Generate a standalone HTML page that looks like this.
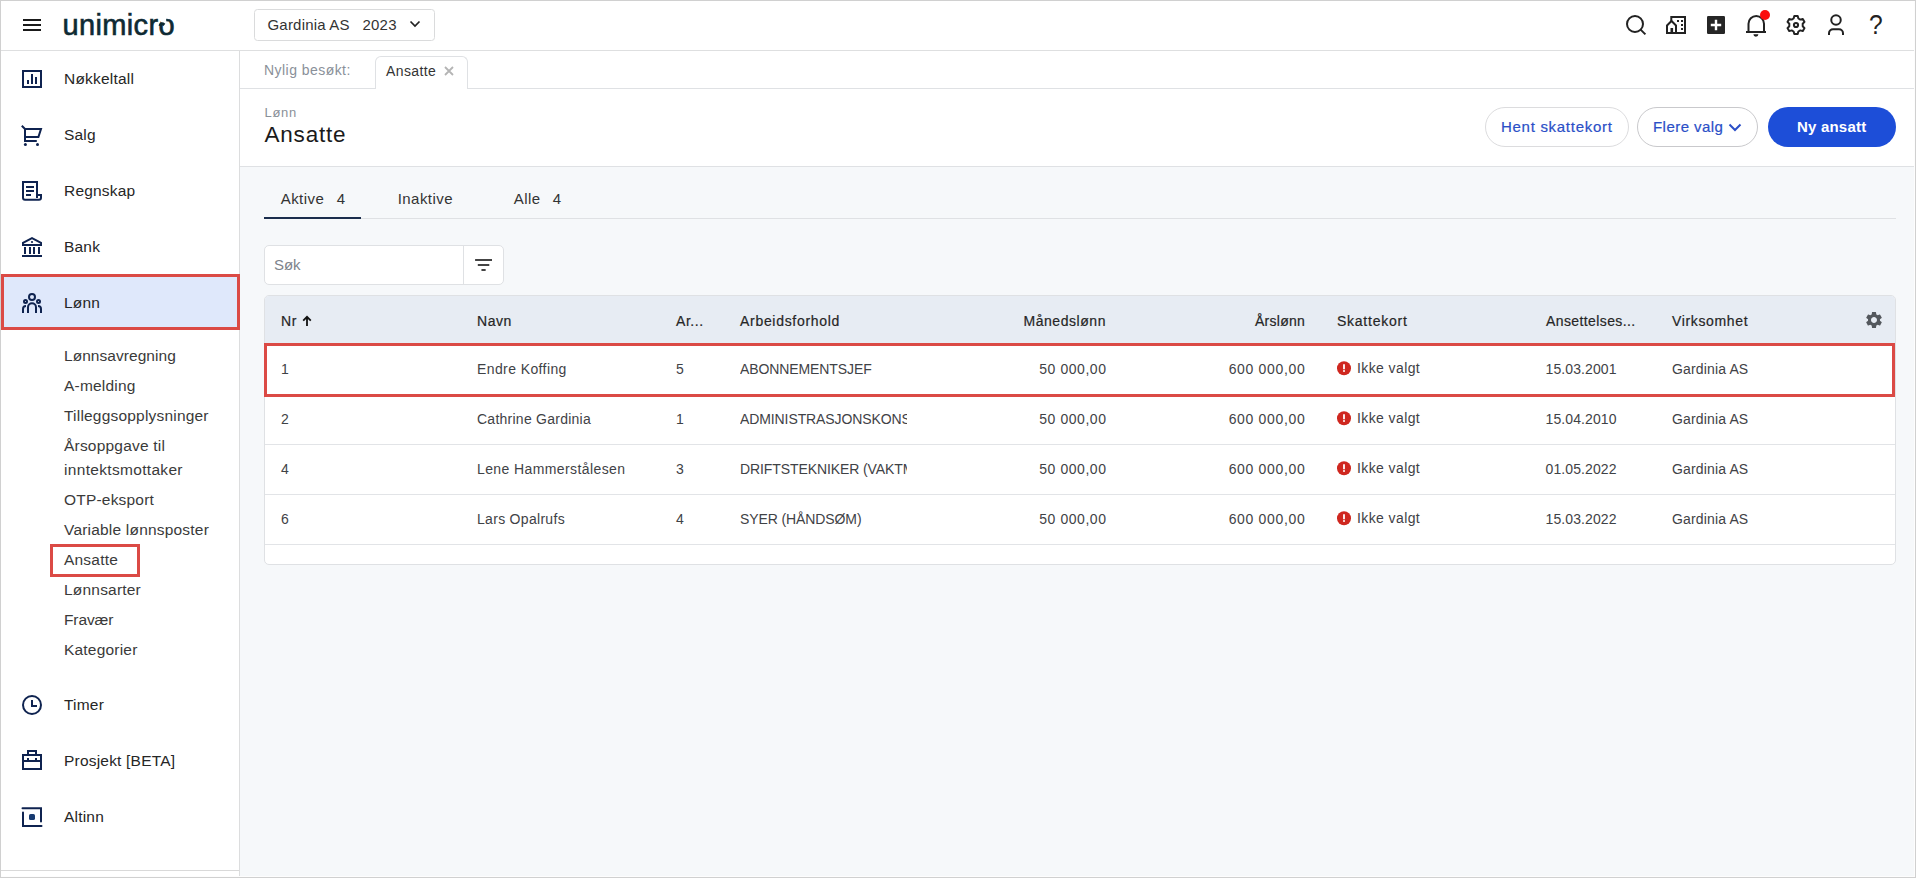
<!DOCTYPE html>
<html lang="no">
<head>
<meta charset="utf-8">
<title>Ansatte</title>
<style>
*{box-sizing:border-box;margin:0;padding:0}
html,body{width:1916px;height:878px;overflow:hidden;background:#f6f8fa}
body{font-family:"Liberation Sans",sans-serif;color:#262626;position:relative;font-size:15px}
.abs{position:absolute;white-space:nowrap}
#frame{position:absolute;left:0;top:0;width:1916px;height:878px;border:1px solid #d0d0d0;pointer-events:none;z-index:50}
#frame:after{content:"";position:absolute;left:0;top:0;right:0;bottom:0;border-right:1px solid #fdfdfd;border-bottom:1px solid #fdfdfd}
#topbar{position:absolute;left:0;top:0;width:1916px;height:51px;background:#fff;border-bottom:1px solid #dedfe0}
#sidebar{position:absolute;left:0;top:51px;width:240px;height:827px;background:#fff;border-right:1px solid #dcddde}
#sidebottom{position:absolute;left:0;top:870px;width:239px;height:1px;background:#d9d9d9}
#tabbar{position:absolute;left:240px;top:51px;width:1676px;height:38px;background:#fff;border-bottom:1px solid #dfe1e4}
#pagehead{position:absolute;left:240px;top:89px;width:1676px;height:78px;background:#fff;border-bottom:1px solid #dfe1e4}
.nav{position:absolute;left:64px;font-size:15.5px;line-height:18px;color:#262626;letter-spacing:.2px;white-space:nowrap}
.sub{position:absolute;left:64px;font-size:15.5px;line-height:18px;color:#3a3a3a;letter-spacing:.2px;white-space:nowrap}
.tb{font-size:15px;line-height:18px;color:#333;letter-spacing:.45px}
.th{font-size:14px;line-height:18px;color:#262626;letter-spacing:.55px;-webkit-text-stroke:.2px #262626}
.td{font-size:14px;line-height:18px;color:#3f4246;letter-spacing:.4px}
.r{text-align:right}
.ico{position:absolute;left:20px;width:24px;height:24px}
</style>
</head>
<body>
<div id="topbar"></div>
<div id="sidebar"></div>
<div id="sidebottom"></div>
<div id="tabbar"></div>
<div id="pagehead"></div>

<header>
<!-- TOPBAR -->
<svg class="abs" style="left:20px;top:13px" width="24" height="24" viewBox="0 0 24 24"><path d="M3 18h18v-2H3v2zm0-5h18v-2H3v2zm0-7v2h18V6H3z" fill="#1a1a1a"/></svg>
<div class="abs tx" id="logo" style="left:62.5px;top:8.5px;font-size:29px;color:#0e2a33;letter-spacing:.35px;line-height:32px;-webkit-text-stroke:.6px #0e2a33">unimicro</div>
<svg class="abs" style="left:150px;top:10px" width="30" height="30" viewBox="150 10 30 30" fill="none"><path d="M166.600 27L166 16.500L158.700 16.500L158.700 19.800Z" fill="#fff"/><path d="M160.100 26C160.400 23.200 162.600 23.500 164.400 24.900" stroke="#0e2a33" stroke-width="3" stroke-linecap="butt"/></svg>
<div class="abs" style="left:254px;top:9px;width:181px;height:32px;border:1px solid #dadbdc;border-radius:3.500px;background:#fff"></div>
<div class="abs tx" style="left:267.500px;top:16px;font-size:15px;color:#333;letter-spacing:.2px;line-height:18px">Gardinia AS</div>
<div class="abs tx" style="left:362.500px;top:16px;font-size:15px;color:#333;letter-spacing:.2px;line-height:18px">2023</div>
<svg class="abs" style="left:408px;top:17px" width="14" height="14" viewBox="0 0 14 14"><path d="M2.5 4.5L7 9l4.5-4.5" fill="none" stroke="#222" stroke-width="1.7"/></svg>

<!-- TOP ICONS -->
<svg class="abs" style="left:1624px;top:13px" width="24" height="24" viewBox="0 0 24 24" fill="none" stroke="#222" stroke-width="2"><circle cx="11" cy="11" r="8"/><path d="M16.600 16.600L21.400 21.400"/></svg>
<svg class="abs" style="left:1664px;top:13px" width="24" height="24" viewBox="0 0 24 24" fill="none" stroke="#222" stroke-width="2"><path d="M7.300 8.300V4H21V20H12"/><path d="M3 20V12.500L7.500 8L12 12.500V20Z"/><path d="M6.500 20h2.600v-5H6.500z" fill="#222" stroke="none"/><path d="M13 7h2v2h-2zM17 7h2v2h-2zM17 11h2v2h-2zM17 15h2v2h-2z" fill="#222" stroke="none"/></svg>
<svg class="abs" style="left:1704px;top:13px" width="24" height="24" viewBox="0 0 24 24"><rect x="3" y="3" width="18" height="18" rx="1.200" fill="#262626"/><path d="M12 6.800v10.400M6.800 12h10.400" stroke="#fff" stroke-width="2.400"/></svg>
<svg class="abs" style="left:1744px;top:13px" width="24" height="24" viewBox="0 0 24 24" fill="none" stroke="#222" stroke-width="2"><path d="M4.500 19V10.750a7.750 7.750 0 0 1 15.500 0V19"/><path d="M2 19h20"/><path d="M9.400 21.200h5a2.500 2.500 0 0 1-5 0z" fill="#222" stroke="none"/></svg>
<div class="abs" style="left:1760px;top:10px;width:10px;height:10px;border-radius:50%;background:#fb0d0d"></div>
<svg class="abs" style="left:1784px;top:13px" width="24" height="24" viewBox="0 0 24 24" fill="none" stroke="#222" stroke-width="2" stroke-linejoin="round"><circle cx="12" cy="12" r="2.100"/><path d="M10.300 3h3.400l.7 2.500 1.900 1.100 2.500-.7 1.700 3-1.800 1.900v2.400l1.800 1.900-1.700 3-2.500-.7-1.900 1.100-.7 2.500h-3.400l-.7-2.500-1.900-1.100-2.500.7-1.700-3 1.800-1.900v-2.400L3.500 8.900l1.700-3 2.500.7 1.900-1.100z"/></svg>
<svg class="abs" style="left:1824px;top:13px" width="24" height="24" viewBox="0 0 24 24" fill="none" stroke="#222" stroke-width="2"><circle cx="12" cy="7" r="4.750"/><path d="M5 22v-1.800a4 4 0 0 1 4-4h6a4 4 0 0 1 4 4V22"/></svg>
<div class="abs" style="left:1869px;top:9px;font-size:28px;line-height:32px;color:#222;transform:scaleX(.88);transform-origin:left top">?</div>

</header>
<nav>
<!-- SIDEBAR -->
<div class="abs" style="left:1px;top:274px;width:239px;height:56px;background:#dfe8fb;border:3px solid #db4a45"></div>
<div class="nav" style="top:70px">Nøkkeltall</div>
<div class="nav" style="top:126px">Salg</div>
<div class="nav" style="top:182px">Regnskap</div>
<div class="nav" style="top:238px">Bank</div>
<div class="nav" style="top:294px">Lønn</div>
<div class="sub" style="top:347px;letter-spacing:.05px">Lønnsavregning</div>
<div class="sub" style="top:377px">A-melding</div>
<div class="sub" style="top:407px">Tilleggsopplysninger</div>
<div class="sub" style="top:437px">Årsoppgave til</div>
<div class="sub" style="top:461px;letter-spacing:.32px">inntektsmottaker</div>
<div class="sub" style="top:491px">OTP-eksport</div>
<div class="sub" style="top:521px">Variable lønnsposter</div>
<div class="abs" style="left:50px;top:544px;width:90px;height:33px;border:3px solid #db4a45"></div>
<div class="sub" style="top:551px">Ansatte</div>
<div class="sub" style="top:581px">Lønnsarter</div>
<div class="sub" style="top:611px;letter-spacing:-.1px">Fravær</div>
<div class="sub" style="top:641px">Kategorier</div>
<div class="nav" style="top:696px">Timer</div>
<div class="nav" style="top:752px">Prosjekt [BETA]</div>
<div class="nav" style="top:808px">Altinn</div>


<!-- SIDEBAR ICONS -->
<svg class="abs" style="left:0;top:51px" width="60" height="820" viewBox="0 51 60 820" fill="none" stroke="#0f2350" stroke-width="2">
<rect x="23" y="71" width="18" height="16"/>
<path d="M28 80v4M32 74v10M36 77v7"/>
<path d="M21.800 125.800L25 129H41L38.400 137H25M25 129V141H36.800" stroke-linejoin="miter"/>
<circle cx="25.400" cy="144.500" r="1.500" fill="#0f2350" stroke="none"/><circle cx="37.500" cy="144.500" r="1.500" fill="#0f2350" stroke="none"/>
<path d="M37 195V182H23V197.800a2 2 0 0 0 2 2H39a2 2 0 0 0 2-2V195H37V198"/>
<path d="M26 187h8M26 191h8M26 195h5"/>
<path d="M23 245V242.800L32 238.100L41 242.800V245Z"/>
<circle cx="32" cy="242" r="1.100" fill="#0f2350" stroke="none"/>
<path d="M25 247v7M30 247v7M34 247v7M39 247v7M22 256h20"/>
<circle cx="32" cy="297" r="3"/>
<circle cx="25.500" cy="301.500" r="1.500"/><circle cx="38.500" cy="301.500" r="1.500"/>
<path d="M28 313V307.200a4 4 0 0 1 8 0V313M23 313V309a3 3 0 0 1 3-3M41 313V309a3 3 0 0 0-3-3"/>
<circle cx="32" cy="705" r="9"/>
<path d="M32 700v6h5"/>
<rect x="23" y="755" width="18" height="14"/>
<path d="M28 755V751H36V755M23 761H41M28 758v3M36 758v3"/>
<path d="M22.500 808.200H41V821.500M23 812.500V826H41.500" stroke-linecap="round"/>
<rect x="29" y="814" width="6" height="6" rx="1.600" fill="#173a70" stroke="none"/>
</svg>

</nav>
<main>
<section id="recent">
<!-- TAB BAR -->
<div class="abs tx" style="left:264px;top:62px;font-size:14px;line-height:16px;color:#8a9099;letter-spacing:.45px">Nylig besøkt:</div>
<div class="abs" style="left:375px;top:56px;width:93px;height:33px;background:#fff;border:1px solid #dfe1e4;border-bottom:none;border-radius:6px 6px 0 0"></div>
<div class="abs tx" style="left:386px;top:63px;font-size:14px;line-height:16px;color:#333;letter-spacing:.4px">Ansatte</div>
<svg class="abs" style="left:443px;top:65px" width="12" height="12" viewBox="0 0 12 12"><path d="M2 2l8 8M10 2l-8 8" stroke="#b4b4b4" stroke-width="1.800"/></svg>

</section>
<section id="title">
<!-- PAGE HEAD -->
<div class="abs tx" style="left:264.500px;top:104.500px;font-size:13px;line-height:16px;color:#8a9099;letter-spacing:.7px">Lønn</div>
<div class="abs tx" style="left:264.500px;top:121.500px;font-size:22.500px;line-height:26px;color:#1a1a1a;letter-spacing:.8px">Ansatte</div>
<div class="abs" style="left:1485px;top:107px;width:144px;height:40px;border:1px solid #dcdcde;border-radius:20px;background:#fff"></div>
<div class="abs tx" style="left:1501px;top:118px;font-size:15px;line-height:18px;color:#2b4fc7;letter-spacing:.71px;-webkit-text-stroke:.2px #2b4fc7">Hent skattekort</div>
<div class="abs" style="left:1637px;top:107px;width:121px;height:40px;border:1px solid #c9c9cc;border-radius:20px;background:#fff"></div>
<div class="abs tx" style="left:1653px;top:118px;font-size:15px;line-height:18px;color:#2b4fc7;letter-spacing:.45px;-webkit-text-stroke:.2px #2b4fc7">Flere valg</div>
<svg class="abs" style="left:1727px;top:120px" width="16" height="14" viewBox="0 0 16 14"><path d="M2.500 4.500L8 10l5.500-5.500" fill="none" stroke="#2b4fc7" stroke-width="2"/></svg>
<div class="abs" style="left:1768px;top:107px;width:128px;height:40px;border-radius:20px;background:#1d4ed8"></div>
<div class="abs tx" style="left:1797px;top:118px;font-size:15px;line-height:18px;color:#fff;font-weight:bold;letter-spacing:.2px">Ny ansatt</div>

</section>
<section id="filters">
<!-- FILTER TABS -->
<div class="abs" style="left:264px;top:218px;width:1632px;height:1px;background:#dfe1e4"></div>
<div class="abs" style="left:264px;top:217px;width:97px;height:2px;background:#1b2d4d"></div>
<div class="abs tb" style="left:280.7px;top:190px">Aktive</div>
<div class="abs tb" style="left:336.7px;top:190px">4</div>
<div class="abs tb" style="left:397.7px;top:190px">Inaktive</div>
<div class="abs tb" style="left:513.7px;top:190px">Alle</div>
<div class="abs tb" style="left:552.7px;top:190px">4</div>

<!-- SEARCH -->
<div class="abs" style="left:264px;top:245px;width:240px;height:40px;border:1px solid #dfe1e4;border-radius:5px;background:#fff"></div>
<div class="abs" style="left:463px;top:246px;width:1px;height:38px;background:#dfe1e4"></div>
<div class="abs tx" style="left:274px;top:256px;font-size:15px;line-height:18px;color:#7d838b;letter-spacing:-.1px">Søk</div>
<svg class="abs" style="left:472px;top:253px" width="24" height="24" viewBox="0 0 24 24"><path d="M3.100 6h16.900v2H3.100zM5.800 11h11.500v2H5.800zM9.450 16h4.200v2h-4.200z" fill="#444"/></svg>


</section>
<section id="employees">
<!-- TABLE -->
<div class="abs" style="left:264px;top:295px;width:1632px;height:270px;border:1px solid #dfe1e4;border-radius:5px;background:#fff;overflow:hidden">
<div style="position:absolute;left:0;top:0;width:100%;height:49px;background:#e7ecf3"></div>
</div>
<div class="abs th" style="left:281px;top:312px">Nr</div>
<svg class="abs" style="left:301px;top:315px" width="12" height="12" viewBox="0 0 12 12"><path d="M6 11V2M2.200 5.600L6 1.800l3.800 3.800" fill="none" stroke="#111" stroke-width="1.800"/></svg>
<div class="abs th" style="left:477px;top:312px">Navn</div>
<div class="abs th" style="left:676px;top:312px">Ar...</div>
<div class="abs th" style="left:740px;top:312px;letter-spacing:.7px">Arbeidsforhold</div>
<div class="abs th r" style="right:810px;top:312px">Månedslønn</div>
<div class="abs th r" style="right:611px;top:312px;letter-spacing:.25px">Årslønn</div>
<div class="abs th" style="left:1337px;top:312px;letter-spacing:.75px">Skattekort</div>
<div class="abs th" style="left:1546px;top:312px;letter-spacing:.4px">Ansettelses...</div>
<div class="abs th" style="left:1672px;top:312px;letter-spacing:.65px">Virksomhet</div>
<svg class="abs" style="left:1864px;top:310px" width="20" height="20" viewBox="0 0 24 24"><path fill="#54585d" d="M19.140 12.940c.040-.300.060-.610.060-.940 0-.320-.020-.640-.070-.940l2.030-1.580a.490.490 0 0 0 .120-.610l-1.920-3.320a.488.488 0 0 0-.590-.220l-2.390.960c-.500-.380-1.030-.700-1.620-.940l-.360-2.540a.484.484 0 0 0-.480-.410h-3.840c-.240 0-.430.170-.470.410l-.360 2.540c-.590.240-1.130.570-1.620.940l-2.390-.960c-.220-.080-.470 0-.590.220L2.740 8.870c-.120.210-.080.470.120.610l2.030 1.580c-.050.300-.090.630-.090.940s.020.640.070.940l-2.030 1.580a.490.490 0 0 0-.120.610l1.920 3.320c.120.220.370.290.590.220l2.390-.960c.500.380 1.030.700 1.620.940l.360 2.540c.050.240.240.410.480.410h3.840c.240 0 .440-.170.470-.410l.360-2.540c.590-.240 1.130-.560 1.620-.940l2.390.960c.220.080.470 0 .590-.220l1.920-3.320c.120-.220.070-.470-.120-.610l-2.010-1.580zM12 15.600c-1.980 0-3.600-1.620-3.600-3.600s1.620-3.600 3.600-3.600 3.600 1.620 3.600 3.600-1.620 3.600-3.600 3.600z"/></svg>
<div class="abs td" style="left:281px;top:360px">1</div>
<div class="abs td" style="left:477px;top:360px">Endre Koffing</div>
<div class="abs td" style="left:676px;top:360px">5</div>
<div class="abs td" style="left:740px;top:360px;width:167px;overflow:hidden;letter-spacing:-.1px">ABONNEMENTSJEF</div>
<div class="abs td r" style="right:810px;top:360px;letter-spacing:.55px;right:809.500px">50 000,00</div>
<div class="abs td r" style="right:611px;top:360px;letter-spacing:.68px;right:610.500px">600 000,00</div>
<svg class="abs" style="left:1337px;top:361px" width="14" height="15" viewBox="0 0 14 15"><circle cx="7" cy="7.200" r="7" fill="#cf271f"/><path d="M7 3.200v5.100" stroke="#fff" stroke-width="1.800"/><circle cx="7" cy="10.100" r="1" fill="#fff"/></svg>
<div class="abs td" style="left:1357px;top:359px">Ikke valgt</div>
<div class="abs td" style="left:1545px;top:360px;letter-spacing:.1px;left:1545.500px">15.03.2001</div>
<div class="abs td" style="left:1672px;top:360px;letter-spacing:.15px">Gardinia AS</div>
<div class="abs" style="left:265px;top:444px;width:1630px;height:1px;background:#e2e4e7"></div>
<div class="abs td" style="left:281px;top:410px">2</div>
<div class="abs td" style="left:477px;top:410px;letter-spacing:.25px">Cathrine Gardinia</div>
<div class="abs td" style="left:676px;top:410px">1</div>
<div class="abs td" style="left:740px;top:410px;width:167px;overflow:hidden;letter-spacing:-.1px">ADMINISTRASJONSKONSULENT</div>
<div class="abs td r" style="right:810px;top:410px;letter-spacing:.55px;right:809.500px">50 000,00</div>
<div class="abs td r" style="right:611px;top:410px;letter-spacing:.68px;right:610.500px">600 000,00</div>
<svg class="abs" style="left:1337px;top:411px" width="14" height="15" viewBox="0 0 14 15"><circle cx="7" cy="7.200" r="7" fill="#cf271f"/><path d="M7 3.200v5.100" stroke="#fff" stroke-width="1.800"/><circle cx="7" cy="10.100" r="1" fill="#fff"/></svg>
<div class="abs td" style="left:1357px;top:409px">Ikke valgt</div>
<div class="abs td" style="left:1545px;top:410px;letter-spacing:.1px;left:1545.500px">15.04.2010</div>
<div class="abs td" style="left:1672px;top:410px;letter-spacing:.15px">Gardinia AS</div>
<div class="abs" style="left:265px;top:494px;width:1630px;height:1px;background:#e2e4e7"></div>
<div class="abs td" style="left:281px;top:460px">4</div>
<div class="abs td" style="left:477px;top:460px">Lene Hammerstålesen</div>
<div class="abs td" style="left:676px;top:460px">3</div>
<div class="abs td" style="left:740px;top:460px;width:167px;overflow:hidden;letter-spacing:-.1px">DRIFTSTEKNIKER (VAKTMESTER)</div>
<div class="abs td r" style="right:810px;top:460px;letter-spacing:.55px;right:809.500px">50 000,00</div>
<div class="abs td r" style="right:611px;top:460px;letter-spacing:.68px;right:610.500px">600 000,00</div>
<svg class="abs" style="left:1337px;top:461px" width="14" height="15" viewBox="0 0 14 15"><circle cx="7" cy="7.200" r="7" fill="#cf271f"/><path d="M7 3.200v5.100" stroke="#fff" stroke-width="1.800"/><circle cx="7" cy="10.100" r="1" fill="#fff"/></svg>
<div class="abs td" style="left:1357px;top:459px">Ikke valgt</div>
<div class="abs td" style="left:1545px;top:460px;letter-spacing:.1px;left:1545.500px">01.05.2022</div>
<div class="abs td" style="left:1672px;top:460px;letter-spacing:.15px">Gardinia AS</div>
<div class="abs" style="left:265px;top:544px;width:1630px;height:1px;background:#e2e4e7"></div>
<div class="abs td" style="left:281px;top:510px">6</div>
<div class="abs td" style="left:477px;top:510px;letter-spacing:.3px">Lars Opalrufs</div>
<div class="abs td" style="left:676px;top:510px">4</div>
<div class="abs td" style="left:740px;top:510px;width:167px;overflow:hidden;letter-spacing:-.1px">SYER (HÅNDSØM)</div>
<div class="abs td r" style="right:810px;top:510px;letter-spacing:.55px;right:809.500px">50 000,00</div>
<div class="abs td r" style="right:611px;top:510px;letter-spacing:.68px;right:610.500px">600 000,00</div>
<svg class="abs" style="left:1337px;top:511px" width="14" height="15" viewBox="0 0 14 15"><circle cx="7" cy="7.200" r="7" fill="#cf271f"/><path d="M7 3.200v5.100" stroke="#fff" stroke-width="1.800"/><circle cx="7" cy="10.100" r="1" fill="#fff"/></svg>
<div class="abs td" style="left:1357px;top:509px">Ikke valgt</div>
<div class="abs td" style="left:1545px;top:510px;letter-spacing:.1px;left:1545.500px">15.03.2022</div>
<div class="abs td" style="left:1672px;top:510px;letter-spacing:.15px">Gardinia AS</div>
<div class="abs" style="left:264px;top:343px;width:1631px;height:54px;border:3px solid #db4a45"></div>


</section>
</main>
<div id="frame"></div>
</body>
</html>
